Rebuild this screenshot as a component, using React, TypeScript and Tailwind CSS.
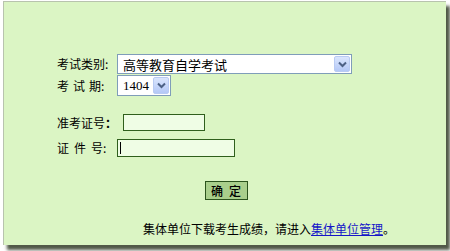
import React from 'react';

const cjk = "font-['SimSun','Noto_Sans_CJK_SC',sans-serif]";

function ChevronButton() {
  return (
    <div className="flex h-full w-[16px] items-center justify-center rounded-[2px] border border-[#b9cbf3] bg-gradient-to-b from-[#dbe6fd] to-[#b4c8f6]">
      <svg width="9" height="7" viewBox="0 0 9 7">
        <path d="M1 1.5 L4.5 5 L8 1.5" fill="none" stroke="#4d6185" strokeWidth="2" />
      </svg>
    </div>
  );
}

function FakeSelect({ value, width, height, serif = false }: { value: string; width: string; height: string; serif?: boolean }) {
  return (
    <div className={`flex ${width} ${height} items-stretch border border-[#7f9db9] bg-white p-[1px]`}>
      <div
        className={`flex flex-1 items-center pl-[4px] leading-none text-black ${
          serif ? "font-['Liberation_Serif',serif] text-[13px]" : `${cjk} text-[13px]`
        }`}
      >
        {value}
      </div>
      <ChevronButton />
    </div>
  );
}

function TextInput({ width, focused = false }: { width: string; focused?: boolean }) {
  return (
    <div className={`flex ${width} h-full items-center border border-[#2f5f1c] bg-[#effde5] pl-[2px]`}>
      {focused && <div className="h-[12px] w-[1px] bg-black" />}
    </div>
  );
}

export default function App() {
  return (
    <div className="h-[251px] w-[450px] overflow-hidden bg-white">
      <div
        className={`ml-[3px] mt-[1px] h-[244px] w-[443px] border-l border-t border-[#b8c3ae] bg-[#dbf5c4] shadow-[4px_5px_3px_rgba(50,60,40,0.85)] ${cjk} text-[12px] text-black`}
      >
        <div className="pl-[53px] pt-[52px]">
          {/* 考试类别 */}
          <div className="flex h-[20px] items-center">
            <div className="w-[60px]">考试类别:</div>
            <FakeSelect value="高等教育自学考试" width="w-[235px]" height="h-[20px]" />
          </div>

          {/* 考试期 */}
          <div className="mt-[1px] flex h-[21px] items-center">
            <div className="flex w-[60px] gap-[4px]">
              <span>考</span>
              <span>试</span>
              <span>期:</span>
            </div>
            <FakeSelect value="1404" width="w-[54px]" height="h-[21px]" serif />
          </div>

          {/* 准考证号 */}
          <div className="mt-[18px] flex h-[17px] items-center">
            <div className="w-[66px]">
              准考证号<span className="font-bold">：</span>
            </div>
            <TextInput width="w-[82px]" />
          </div>

          {/* 证件号 */}
          <div className="mt-[8px] flex h-[18px] items-center">
            <div className="flex w-[60px] gap-[5px]">
              <span>证</span>
              <span>件</span>
              <span>号:</span>
            </div>
            <TextInput width="w-[118px]" focused />
          </div>
        </div>

        {/* 确定 */}
        <div className="mt-[24px] flex justify-center pl-[2px]">
          <button className="flex h-[19px] w-[43px] items-center justify-center gap-[6px] border border-[#2b531d] bg-[#a9cf8c] text-[12px] font-medium leading-none text-black">
            <span>确</span>
            <span>定</span>
          </button>
        </div>

        <div className="mt-[23px] pl-[139px] text-[12px] leading-[12px]">
          集体单位下载考生成绩，请进入
          <a href="#" className="text-[#1515c8] underline">
            集体单位管理
          </a>
          。
        </div>
      </div>
    </div>
  );
}
